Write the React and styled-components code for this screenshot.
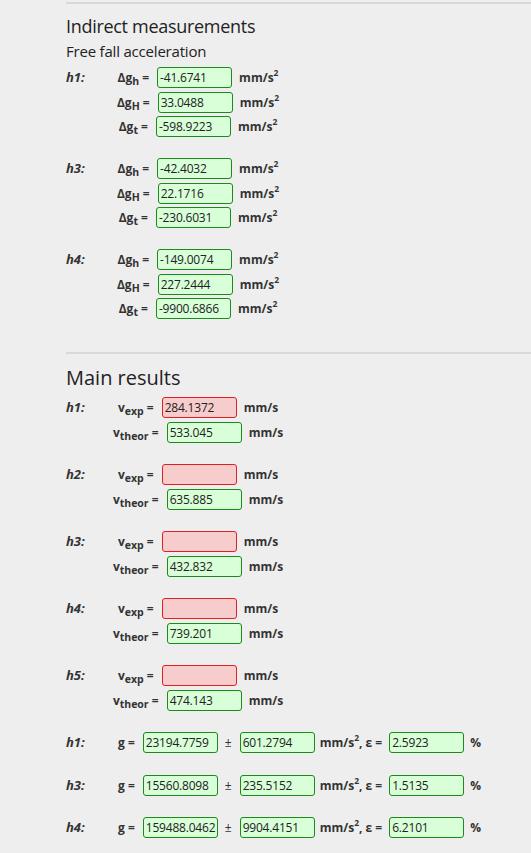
import React from "react";
import styled, { createGlobalStyle } from "styled-components";

const Global = createGlobalStyle`
  html, body { margin: 0; padding: 0; background: #eeeeee; }
  body { font-family: "Open Sans", "Noto Sans", sans-serif; color: #222; }
`;

const Page = styled.div`
  padding: 2px 0 0 66px;
  background: #eeeeee;
  height: 853px;
  overflow: hidden;
  box-sizing: border-box;
`;

const Rule = styled.div`
  height: 2px;
  background: #d9d9d9;
  margin-bottom: ${(p) => p.$after}px;
`;

const Title = styled.div`
  font-size: ${(p) => p.$size}px;
  line-height: ${(p) => p.$lh}px;
  letter-spacing: ${(p) => p.$ls || 0}px;
  font-weight: 500;
  color: #222;
  margin: ${(p) => p.$m || "0"};
`;

const Section = styled.div`
  display: flex;
  flex-direction: column;
  gap: ${(p) => p.$gap}px;
  margin-bottom: ${(p) => p.$after || 0}px;
`;

const Group = styled.div`
  display: grid;
  grid-template-columns: 52px auto;
  align-items: start;
`;

const Label = styled.div`
  font-weight: 700;
  font-style: italic;
  font-size: 13px;
  line-height: 21px;
  color: #333;
`;

const Rows = styled.div`
  display: flex;
  flex-direction: column;
  gap: 3.5px;
  width: ${(p) => (p.$wide ? "auto" : "160px")};
  align-items: ${(p) => (p.$wide ? "flex-start" : "center")};
`;

const Row = styled.div`
  display: flex;
  align-items: center;
  height: 21px;
  font-size: 12px;
  font-weight: 700;
  color: #333;
  white-space: nowrap;
`;

const Sym = styled.span`
  margin-right: 8px;
`;

const Sub = styled.sub`
  font-size: 10.5px;
  vertical-align: -3px;
  line-height: 0;
`;

const Sup = styled.sup`
  font-size: 8.5px;
  vertical-align: 6px;
  line-height: 0;
`;

const Field = styled.div`
  width: 75px;
  height: 21px;
  box-sizing: border-box;
  border: 1px solid ${(p) => (p.$bad ? "#e02020" : "#1a8a1a")};
  background: ${(p) => (p.$bad ? "#f7cccc" : "#d9ffd9")};
  border-radius: 3px;
  font-size: 12px;
  letter-spacing: -0.2px;
  font-weight: 400;
  color: #222;
  line-height: 19px;
  padding-left: 2px;
  overflow: hidden;
`;

const Unit = styled.span`
  margin-left: ${(p) => p.$ml ?? 7}px;
  margin-right: ${(p) => p.$mr ?? 0}px;
`;

const Pm = styled.span`
  font-weight: 400;
  margin: 0 8px 0 7px;
`;

const Delta = ({ s }) => (
  <Sym>
    Δg<Sub>{s}</Sub> =
  </Sym>
);

const Accel = () => (
  <Unit>
    mm/s<Sup>2</Sup>
  </Unit>
);

const indirect = [
  ["h1", ["-41.6741", "33.0488", "-598.9223"]],
  ["h3", ["-42.4032", "22.1716", "-230.6031"]],
  ["h4", ["-149.0074", "227.2444", "-9900.6866"]],
];

const velocity = [
  ["h1", "284.1372", "533.045"],
  ["h2", "", "635.885"],
  ["h3", "", "432.832"],
  ["h4", "", "739.201"],
  ["h5", "", "474.143"],
];

const gravity = [
  ["h1", "23194.7759", "601.2794", "2.5923"],
  ["h3", "15560.8098", "235.5152", "1.5135"],
  ["h4", "159488.0462", "9904.4151", "6.2101"],
];

const App = () => (
  <Page>
    <Global />
    <Rule $after={8} />
    <Title $size={18} $lh={28} $ls={-0.3}>Indirect measurements</Title>
    <Title $size={15} $lh={22} $ls={-0.2} $m="0 0 5px">Free fall acceleration</Title>
    <Section $gap={21} $after={33}>
      {indirect.map(([h, vals]) => (
        <Group key={h}>
          <Label>{h}:</Label>
          <Rows>
            {["h", "H", "t"].map((s, i) => (
              <Row key={s}>
                <Delta s={s} />
                <Field>{vals[i]}</Field>
                <Accel />
              </Row>
            ))}
          </Rows>
        </Group>
      ))}
    </Section>
    <Rule $after={9} />
    <Title $size={20} $lh={30} $m="0 0 4px">Main results</Title>
    <Section $gap={21.5}>
      {velocity.map(([h, exp, theor]) => (
        <Group key={h}>
          <Label>{h}:</Label>
          <Rows>
            <Row>
              <Sym>
                v<Sub>exp</Sub> =
              </Sym>
              <Field $bad>{exp}</Field>
              <Unit>mm/s</Unit>
            </Row>
            <Row>
              <Sym>
                v<Sub>theor</Sub> =
              </Sym>
              <Field>{theor}</Field>
              <Unit>mm/s</Unit>
            </Row>
          </Rows>
        </Group>
      ))}
      {gravity.map(([h, g, dg, eps]) => (
        <Group key={"g" + h}>
          <Label>{h}:</Label>
          <Rows $wide>
            <Row>
              <Sym>g =</Sym>
              <Field>{g}</Field>
              <Pm>±</Pm>
              <Field>{dg}</Field>
              <Unit $ml={5} $mr={7}>
                mm/s<Sup>2</Sup>, ε =
              </Unit>
              <Field>{eps}</Field>
              <Unit $ml={6}>%</Unit>
            </Row>
          </Rows>
        </Group>
      ))}
    </Section>
  </Page>
);

export default App;
